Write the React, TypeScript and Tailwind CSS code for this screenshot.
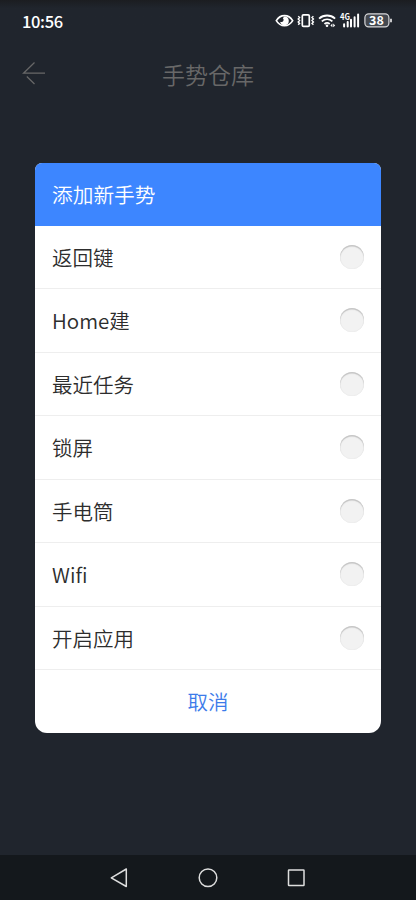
import React from "react";

const gestures: string[] = ["返回键", "Home建", "最近任务", "锁屏", "手电筒", "Wifi", "开启应用"];

function StatusIcons() {
  return (
    <svg width="122" height="20" viewBox="272 11 122 20" className="block" fill="none" stroke="#fff">
      <path d="M276.300 20.700c2-3.400 5-5.100 8.200-5.100s6.200 1.700 8.200 5.100c-2 3.400-5 5.100-8.200 5.100s-6.200-1.700-8.200-5.100z" strokeWidth="1.600" />
      <path d="M284.300 16.400a4.400 4.400 0 1 1-4.200 5.400c1 .5 2.600.2 3.200-.9.700-1.200.1-2.300-.5-2.700z" fill="#fff" stroke="none" />
      <rect x="302.300" y="14.900" width="7" height="11.500" rx="1.200" strokeWidth="1.700" />
      <path d="M298.200 16.200l1.400 1.300-1.400 1.500 1.400 1.500-1.400 1.500 1.400 1.500-1.400 1.300M313.400 16.200l-1.400 1.300 1.400 1.500-1.400 1.500 1.400 1.500-1.400 1.500 1.400 1.300" strokeWidth="1.400" />
      <path d="M319.100 18.600c4.600-4.100 11.400-4.100 16 0M321.800 21.400c3.100-2.700 7.500-2.700 10.600 0M324.500 24c1.500-1.300 3.700-1.300 5.200 0" strokeWidth="1.900" />
      <circle cx="327" cy="25.800" r="1.300" fill="#fff" stroke="none" />
      <path d="m332.400 23.600-2 1.800 2 1.800zM333.200 23.600l2 1.800-2 1.800z" fill="#fff" stroke="none" />
      <text x="340" y="19.900" fill="#fff" stroke="none" fontSize="8.500" fontWeight="700" textLength="10" lengthAdjust="spacingAndGlyphs">4G</text>
      <path d="M344.100 24.200v2.300M347.700 22v4.500M351 19.800v6.700M354.600 17.300v9.200M358.100 14.500v12" strokeWidth="2" strokeLinecap="round" />
      <rect x="364.900" y="13.900" width="24" height="13" rx="3.800" strokeWidth="1.200" stroke="#d7d8da" fill="#454950" />
      <path d="M391 18.700v3.600" strokeWidth="1.500" />
      <text x="376.500" y="25" fill="#fff" stroke="none" fontSize="12.500" fontWeight="700" textAnchor="middle">38</text>
    </svg>
  );
}

export default function App() {
  return (
    <div className="flex h-[900px] w-[416px] flex-col overflow-hidden bg-[#20252d] font-['Noto_Sans_CJK_SC',sans-serif]">
      <div className="flex h-[42px] shrink-0 items-center justify-between bg-linear-to-b from-[#1b1d21] to-[#20252d] to-20% pr-[22px] pl-[22px]">
        <span className="text-[16.500px] leading-none font-medium tracking-[-0.350px] text-white">10:56</span>
        <StatusIcons />
      </div>
      <header className="grid h-[64px] shrink-0 grid-cols-[50px_1fr_50px] items-center">
        <svg width="24" height="24" viewBox="0 0 24 24" className="ml-[22px] block -translate-y-px" fill="none" stroke="#686868" strokeWidth="1.200">
          <path d="M12.500 1.500 1.500 12.200H23M4.800 15.500l7.700 7.500" />
        </svg>
        <h1 className="text-center text-[23px] leading-none font-[350] text-[#686868]">手势仓库</h1>
      </header>
      <main className="flex grow pt-[57px] pl-[35px]">
        <section className="flex h-[569.500px] w-[346px] flex-col overflow-hidden rounded-t-[7px] rounded-b-[12px] bg-white">
          <h2 className="flex h-[62.500px] shrink-0 items-center bg-[#3d86ff] pl-[17px] text-[20.700px] leading-none font-[350] text-white">
            添加新手势
          </h2>
          <ul>
            {gestures.map((label) => (
              <li key={label} className="flex h-[63.500px] items-center justify-between border-b border-[#eeeeee] pr-[17px] pl-[17px]">
                <span className="text-[20.500px] leading-none font-[350] text-[#2d2d2d] [font-variant-ligatures:none]">{label}</span>
                <span className="size-6 rounded-full bg-[#f2f2f2] shadow-[inset_0_1.500px_1px_#c4c4c4,inset_0_0_1px_#d6d6d6]" />
              </li>
            ))}
          </ul>
          <button className="grow text-center text-[20.500px] leading-none font-[350] text-[#3c7bea]">取消</button>
        </section>
      </main>
      <nav className="flex h-[45px] shrink-0 justify-center bg-[#14181c]">
        <svg width="240" height="45" viewBox="88 855 240 45" fill="none" stroke="#dedede" strokeWidth="1.500" strokeLinejoin="round">
          <path d="M126.300 869v17.500L111.300 877.800z" />
          <circle cx="208" cy="877.700" r="8.800" />
          <rect x="288.500" y="870" width="15.500" height="15.500" rx=".5" />
        </svg>
      </nav>
    </div>
  );
}
